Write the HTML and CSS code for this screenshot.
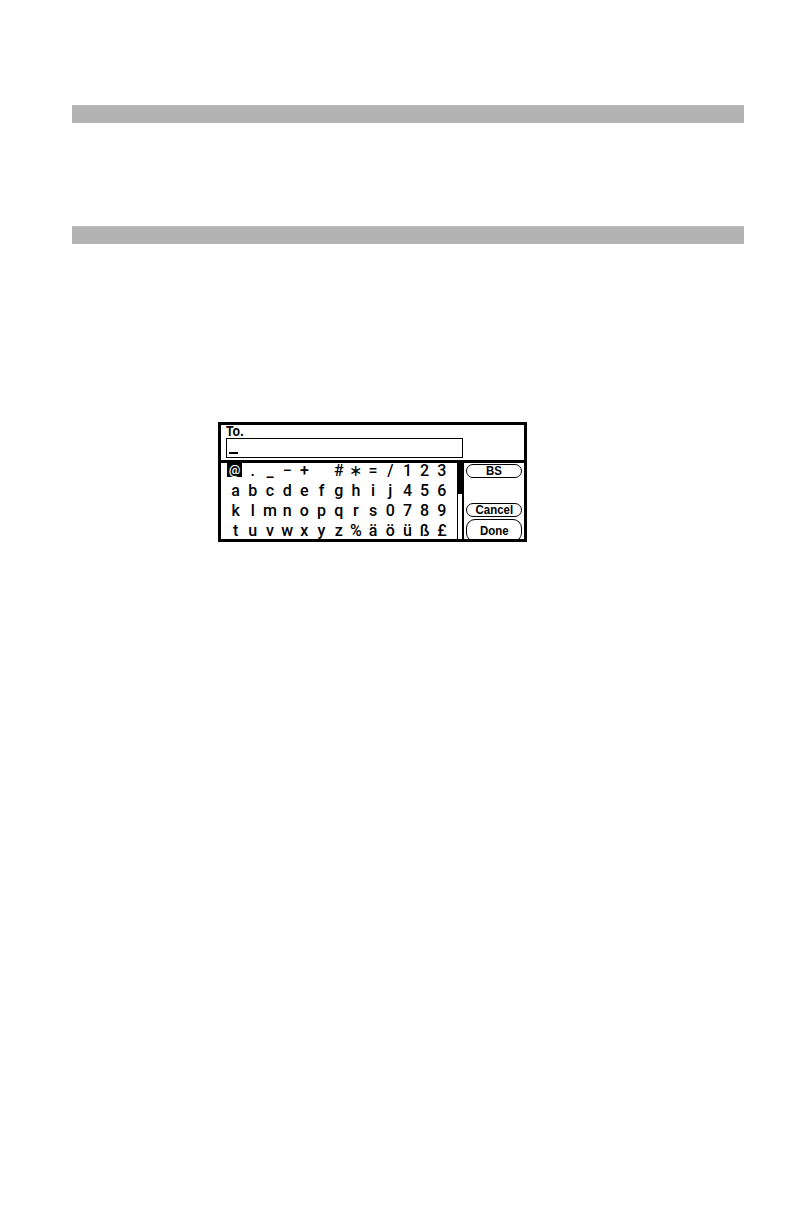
FILE: index.html
```html
<!DOCTYPE html>
<html>
<head>
<meta charset="utf-8">
<link rel="stylesheet" href="styles.css">
</head>
<body>
<div class="page">
  <div class="bar"></div>
  <div class="bar bar2"></div>
  <div class="panel">
    <div class="label"><span class="narrow">To.</span></div>
    <div class="input-row">
      <div class="input"><span class="cursor"></span></div>
    </div>
    <div class="rule"></div>
    <div class="main">
      <div class="grid">
        <span class="cell-sel"><span class="sel">@</span></span><span>.</span><span>_</span><span>−</span><span>+</span><span></span><span>#</span><span>∗</span><span>=</span><span>/</span><span>1</span><span>2</span><span>3</span>
        <span>a</span><span>b</span><span>c</span><span>d</span><span>e</span><span>f</span><span>g</span><span>h</span><span>i</span><span>j</span><span>4</span><span>5</span><span>6</span>
        <span>k</span><span>l</span><span>m</span><span>n</span><span>o</span><span>p</span><span>q</span><span>r</span><span>s</span><span>0</span><span>7</span><span>8</span><span>9</span>
        <span>t</span><span>u</span><span>v</span><span>w</span><span>x</span><span>y</span><span>z</span><span>%</span><span>ä</span><span>ö</span><span>ü</span><span>ß</span><span>£</span>
      </div>
      <div class="scroll"><div class="thumb"></div></div>
      <div class="buttons">
        <div class="btn btn-bs"><span class="narrow">BS</span></div>
        <div class="btn btn-cancel"><span class="narrow">Cancel</span></div>
        <div class="btn btn-done"><span class="narrow">Done</span></div>
      </div>
    </div>
  </div>
</div>
</body>
</html>
```
FILE: styles.css
```css
html, body {
  margin: 0;
  padding: 0;
  background: #ffffff;
}
.page {
  padding: 105px 0 0 72px;
  width: 672px;
}
.bar {
  box-sizing: border-box;
  height: 18px;
  width: 672px;
  background: #b3b3b3;
  border-top: 1px solid #bdbdbd;
}
.bar2 {
  margin-top: 103px;
}
.panel {
  box-sizing: border-box;
  margin-top: 178px;
  margin-left: 146px;
  width: 309px;
  height: 120px;
  border: 3px solid #000;
  background: #fff;
  overflow: hidden;
  font-family: "Liberation Sans", Arial, sans-serif;
  font-weight: bold;
  color: #000;
}
.narrow {
  display: inline-block;
  transform: scaleX(0.88);
}
.label {
  height: 13px;
  line-height: 13px;
  font-size: 14px;
  padding-left: 5px;
}
.label .narrow {
  transform-origin: left center;
}
.input-row {
  display: flex;
  padding-left: 5px;
}
.input {
  box-sizing: border-box;
  width: 237px;
  height: 20px;
  border: 1px solid #000;
  display: flex;
  align-items: flex-end;
  padding: 0 0 3px 2px;
}
.cursor {
  display: block;
  width: 9px;
  height: 2px;
  background: #000;
}
.rule {
  margin-top: 2px;
  height: 3px;
  background: #000;
}
.main {
  display: flex;
  height: 76px;
}
.grid {
  width: 236px;
  box-sizing: border-box;
  padding-left: 6px;
  display: grid;
  grid-template-columns: repeat(13, 17.2px);
  grid-auto-rows: 20px;
  font-family: Roboto, "Liberation Sans", Arial, sans-serif;
  font-weight: 500;
  font-size: 16px;
  line-height: 15px;
  text-align: center;
}
.cell-sel {
  text-align: left;
}
.sel {
  display: inline-block;
  width: 15px;
  height: 14px;
  line-height: 14px;
  font-size: 13px;
  text-align: center;
  background: #000;
  color: #fff;
  vertical-align: top;
}
.scroll {
  box-sizing: border-box;
  width: 7px;
  border-left: 1px solid #000;
  border-right: 2px solid #000;
}
.thumb {
  width: 4px;
  height: 31px;
  background: #000;
}
.buttons {
  display: flex;
  flex-direction: column;
  padding-left: 2px;
}
.btn {
  box-sizing: border-box;
  width: 56px;
  height: 14px;
  border: 1px solid #000;
  border-radius: 7px;
  font-size: 13px;
  line-height: 12px;
  text-align: center;
}
.btn-bs {
  margin-top: 1px;
}
.btn-cancel {
  margin-top: 25px;
}
.btn-done {
  margin-top: 2px;
  height: 30px;
  line-height: 21px;
  border-radius: 9px;
}
```
